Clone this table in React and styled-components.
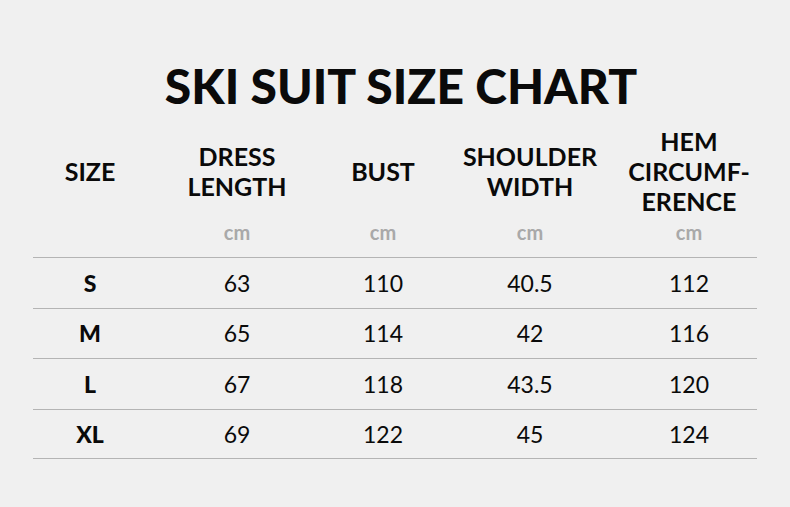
import React from 'react'
import styled, { createGlobalStyle } from 'styled-components'

const GlobalStyle = createGlobalStyle`
  html, body {
    margin: 0;
    padding: 0;
    background: #f0f0f0;
  }
  body {
    font-family: Lato, "Open Sans", sans-serif;
    color: #0a0a0a;
  }
`

const Page = styled.div`
  width: 790px;
  height: 507px;
  box-sizing: border-box;
  padding: 0 33px;
  display: flex;
  flex-direction: column;
  align-items: stretch;
  overflow: hidden;
`

const Title = styled.h1`
  margin: 0;
  height: 120px;
  display: flex;
  align-items: center;
  justify-content: center;
  font-size: 48px;
  font-weight: 900;
  letter-spacing: 0;
  padding-top: 52px;
  box-sizing: border-box;
  padding-left: 12px;
  line-height: 1;
`

const COLS = '114px 180px 112px 182px 136px'

const HeaderRow = styled.div`
  display: grid;
  grid-template-columns: ${COLS};
  height: 98px;
  padding-top: 3px;
  box-sizing: border-box;
  align-items: center;
`

const HeadCell = styled.div`
  text-align: center;
  font-size: 25px;
  font-weight: 700;
  line-height: 30px;
  text-transform: uppercase;
`

const UnitRow = styled.div`
  display: grid;
  grid-template-columns: ${COLS};
  height: 39px;
  align-items: start;
`

const Unit = styled.div`
  text-align: center;
  font-size: 20px;
  font-weight: 700;
  color: #a9a9a9;
  line-height: 28px;
`

const Row = styled.div`
  display: grid;
  grid-template-columns: ${COLS};
  height: 50.5px;
  box-sizing: border-box;
  border-top: 1px solid #b4b4b4;
  align-items: center;
  &:last-child {
    border-bottom: 1px solid #b4b4b4;
  }
`

const Cell = styled.div`
  text-align: center;
  font-size: 23px;
  font-weight: ${({ bold }) => (bold ? 900 : 400)};
  line-height: 1;
  padding-top: 1px;
`

const Body = styled.div`
  display: flex;
  flex-direction: column;
`

const headers = [
  ['SIZE'],
  ['DRESS', 'LENGTH'],
  ['BUST'],
  ['SHOULDER', 'WIDTH'],
  ['HEM', 'CIRCUMF-', 'ERENCE'],
]

const rows = [
  ['S', '63', '110', '40.5', '112'],
  ['M', '65', '114', '42', '116'],
  ['L', '67', '118', '43.5', '120'],
  ['XL', '69', '122', '45', '124'],
]

export default function App() {
  return (
    <Page>
      <GlobalStyle />
      <Title>SKI SUIT SIZE CHART</Title>
      <HeaderRow>
        {headers.map((lines, i) => (
          <HeadCell key={i}>
            {lines.map((l) => (
              <div key={l}>{l}</div>
            ))}
          </HeadCell>
        ))}
      </HeaderRow>
      <UnitRow>
        <Unit />
        <Unit>cm</Unit>
        <Unit>cm</Unit>
        <Unit>cm</Unit>
        <Unit>cm</Unit>
      </UnitRow>
      <Body>
        {rows.map((r) => (
          <Row key={r[0]}>
            {r.map((v, i) => (
              <Cell key={i} bold={i === 0}>{v}</Cell>
            ))}
          </Row>
        ))}
      </Body>
    </Page>
  )
}
